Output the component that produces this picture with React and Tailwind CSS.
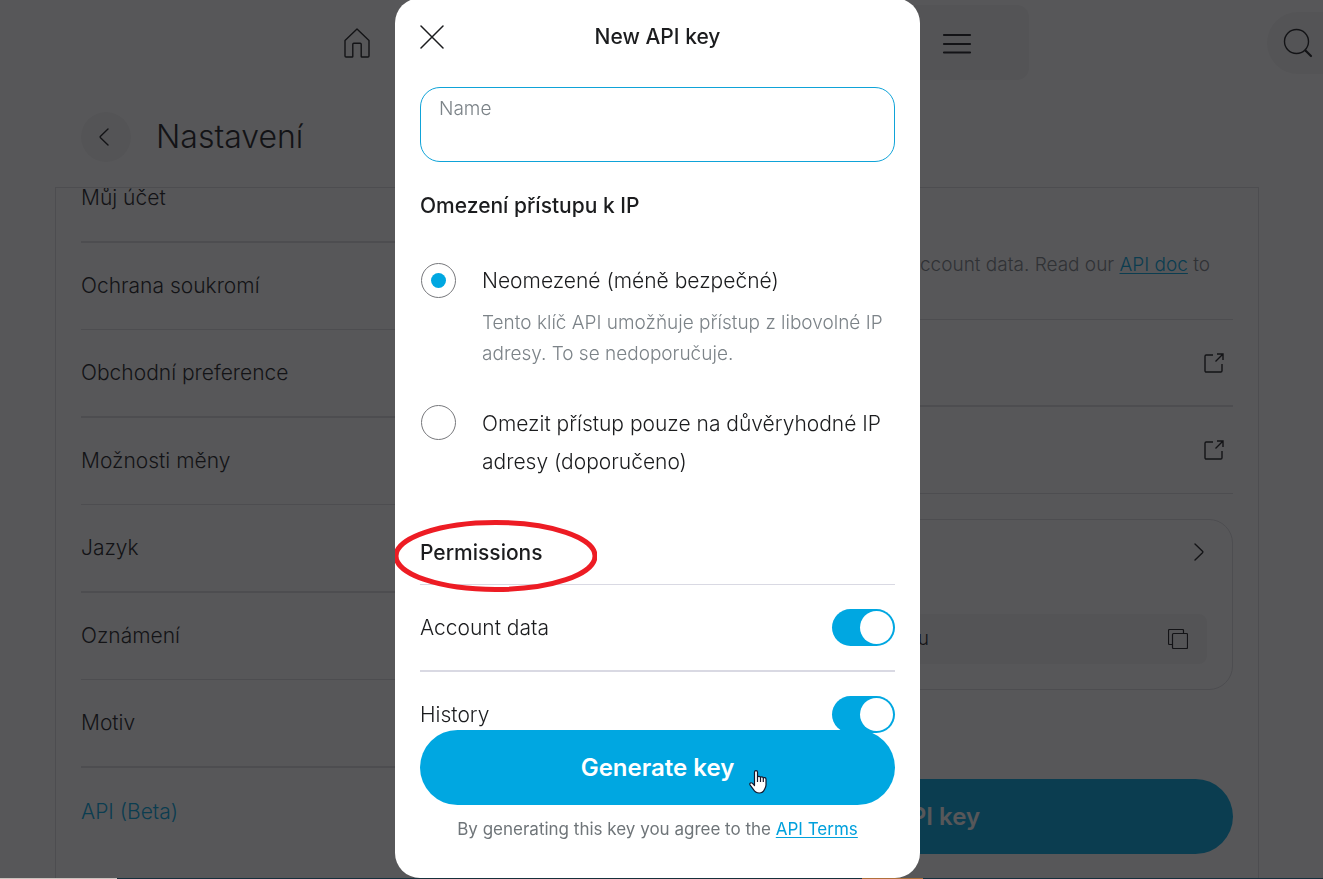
import { useState } from 'react'

const menu = [
  'Můj účet',
  'Ochrana soukromí',
  'Obchodní preference',
  'Možnosti měny',
  'Jazyk',
  'Oznámení',
  'Motiv',
  'API (Beta)',
]

const HomeIcon = () => (
  <svg width="26" height="30" viewBox="0 0 26 30" fill="none" stroke="currentColor" strokeWidth="1.4" strokeLinejoin="round">
    <path d="M1 12.5 13 1l12 11.500V28a1 1 0 0 1-1 1h-6.200a.6.6 0 0 1-.6-.6V16.200a1 1 0 0 0-1-1h-6.400a1 1 0 0 0-1 1V28.400a.6.6 0 0 1-.6.6H2a1 1 0 0 1-1-1z" />
  </svg>
)

const MenuIcon = () => (
  <svg width="30" height="22" viewBox="0 0 30 22" fill="none" stroke="currentColor" strokeWidth="2.200" strokeLinecap="round">
    <path d="M2 3h26M2 12h26M2 20.500h26" />
  </svg>
)

const SearchIcon = () => (
  <svg width="30" height="30" viewBox="0 0 30 30" fill="none" stroke="currentColor" strokeLinecap="round">
    <circle cx="13.500" cy="13.500" r="12" strokeWidth="1.400" />
    <path d="m22.500 22.500 5.500 5.500" strokeWidth="2.200" />
  </svg>
)

const Chevron = ({ left }) => (
  <svg width="10" height="18" viewBox="0 0 10 18" fill="none" stroke="currentColor" strokeWidth="1.400" strokeLinecap="round" strokeLinejoin="round">
    <path d={left ? 'M9 1 1.500 8.300a1 1 0 0 0 0 1.400L9 17' : 'm1 1 7.500 7.300a1 1 0 0 1 0 1.400L1 17'} />
  </svg>
)

const ExternalIcon = () => (
  <svg width="20" height="20" viewBox="0 0 20 20" fill="none" stroke="currentColor" strokeWidth="1.400">
    <path d="M9 2H2.200A1.200 1.200 0 0 0 1 3.200v14.600A1.200 1.200 0 0 0 2.200 19h14.600a1.200 1.200 0 0 0 1.200-1.200V11M13 1h6v6M19 1l-7.500 7.500" />
  </svg>
)

const CopyIcon = () => (
  <svg width="20" height="20" viewBox="0 0 20 20" fill="none" stroke="currentColor" strokeWidth="1.200" strokeLinejoin="round">
    <rect x="4.500" y="4.500" width="15" height="15" rx="1" />
    <path d="M4.500 15.500h-3a1 1 0 0 1-1-1v-13a1 1 0 0 1 1-1h13a1 1 0 0 1 1 1v3" />
  </svg>
)

const CloseIcon = () => (
  <svg width="24" height="24" viewBox="0 0 24 24" fill="none" stroke="currentColor" strokeWidth="1.500" strokeLinecap="round">
    <path d="m1 1 22 22M23 1 1 23" />
  </svg>
)

const HandPointer = () => (
  <svg className="absolute left-[329px] top-10" width="18" height="24" viewBox="0 0 18 24" fill="#fff" stroke="#12162b" strokeWidth="1.200" strokeLinejoin="round">
    <path d="M5.500 13.500V2.200a1.500 1.500 0 0 1 3 0V7c.3-1 2.700-1 3 .4.500-.9 2.500-.7 2.800.5.700-.7 2.700-.3 2.700 1.300V15c0 2-1 3.500-1.700 4.800-.8 2-2.300 3.200-5 3.200-3.300 0-5-1.700-6-3.700L1 14.800c-.7-1.400 1-2.700 2.300-1.600l2.200 2.300z" />
    <path d="M8.500 7v5M11.500 7.500V12M14.300 8v4" fill="none" />
  </svg>
)

function Radio({ id, checked, onChange, children }) {
  return (
    <div className="flex items-start">
      <input
        type="radio"
        name="ip"
        id={id}
        checked={checked}
        onChange={onChange}
        className="ml-px mr-[26px] grid h-[35px] w-[35px] shrink-0 appearance-none place-content-center rounded-full border border-[#77787c] before:h-[15px] before:w-[15px] before:rounded-full checked:before:bg-[#00a7e1]"
      />
      {children}
    </div>
  )
}

function Permission({ id, label }) {
  const [on, setOn] = useState(true)
  return (
    <div className="flex h-[87px] items-center justify-between border-b-2 border-[#d9d9e3]">
      <label htmlFor={id} className="text-[21px] font-light leading-7">{label}</label>
      <input
        type="checkbox"
        role="switch"
        id={id}
        checked={on}
        onChange={() => setOn(!on)}
        className="flex h-[37px] w-[63px] appearance-none items-center rounded-full bg-gray-300 px-0.5 before:h-[33px] before:w-[33px] before:rounded-full before:bg-white checked:justify-end checked:bg-[#00a7e1]"
      />
    </div>
  )
}

function SettingsPage() {
  return (
    <div className="flex h-full flex-col">
      <header className="relative flex h-[86px] shrink-0 justify-center pr-2.5 pt-[5px]">
        <nav className="flex h-[75px] gap-1.5">
          <a href="#home" aria-label="Home" className="flex w-36 items-center justify-center"><HomeIcon /></a>
          <span className="w-36" />
          <span className="w-36" />
          <span className="w-36" />
          <button aria-label="Menu" className="flex w-36 items-center justify-center rounded-xl bg-[#f5f5f5]"><MenuIcon /></button>
        </nav>
        <button aria-label="Search" className="absolute right-0 top-3 flex h-[62px] w-14 items-center rounded-l-full bg-[#f5f5f5] pl-4">
          <SearchIcon />
        </button>
      </header>

      <div className="flex h-[101px] shrink-0 items-center gap-[25px] pl-[81px]">
        <button aria-label="Back" className="flex h-[50px] w-[50px] items-center justify-center rounded-full bg-[#f5f5f5] pr-1"><Chevron left /></button>
        <h1 className="text-[32px] font-light">Nastavení</h1>
      </div>

      <div className="ml-[55px] mr-16 flex min-h-0 flex-1 overflow-hidden border border-b-0 border-[#dcdce0] px-[25px]">
        <ul className="w-[400px] shrink-0 text-[21px] font-light leading-5">
          {menu.map((item, i) => (
            <li
              key={item}
              className={
                i % 2 === 0
                  ? 'flex h-[88px] items-center border-b-2 border-[#dcdce0] first:h-[55px] first:items-start'
                  : 'flex h-[87px] items-center border-b border-[#dcdce0] last:border-0'
              }
            >
              <a href="#settings" className={item === 'API (Beta)' ? 'text-[#00a7e1]' : ''}>{item}</a>
            </li>
          ))}
        </ul>

        <main className="ml-[26px] min-w-0 flex-1">
          <p className="flex h-[131px] items-center justify-end whitespace-pre pr-[23px] pt-[23px] text-[19px] font-light text-[#7c8388]">
            account data. Read our <a href="#doc" className="text-[#00a7e1] underline underline-offset-2">API doc</a> to
          </p>
          <a href="#guide" aria-label="Guide" className="flex h-[88px] items-center justify-end border-b-2 border-t border-[#dcdce0] pr-[9px]">
            <ExternalIcon />
          </a>
          <a href="#support" aria-label="Support" className="flex h-[87px] items-center justify-end border-b border-[#dcdce0] pr-[9px]">
            <ExternalIcon />
          </a>
          <section className="mt-[25px] rounded-3xl border border-[#dcdce0] px-[25px] pb-[25px] pt-[23px]">
            <div className="flex h-[71px] justify-end pr-[3px]"><Chevron /></div>
            <div className="flex h-[50px] items-center justify-between rounded-lg bg-[#f5f5f5] pr-[19px]">
              <span className="w-[396px] text-right text-[19px] font-light">u</span>
              <button aria-label="Copy"><CopyIcon /></button>
            </div>
          </section>
          <button className="mt-[89px] h-[75px] w-full rounded-full bg-[#00a7e1] pr-[253px] text-right text-2xl font-semibold text-white">
            API key
          </button>
        </main>
      </div>
    </div>
  )
}

function NewKeyDialog() {
  const [access, setAccess] = useState('any')
  const [name, setName] = useState('')

  return (
    <div className="fixed inset-0 flex justify-center bg-[#0f1013]/70 pb-px pr-2">
      <div role="dialog" aria-labelledby="title" className="-mt-0.5 flex w-[525px] flex-col rounded-[25px] bg-white pt-0.5">
        <header className="grid h-[74px] shrink-0 grid-cols-[24px_1fr_24px] items-center px-[25px]">
          <button aria-label="Close"><CloseIcon /></button>
          <h2 id="title" className="text-center text-[21px] font-medium leading-7">New API key</h2>
        </header>

        <div className="min-h-0 flex-1 overflow-hidden px-[25px] pt-[13px]">
          <div className="h-[75px] rounded-[20px] border border-[#0fa3d8] px-[18px] pt-2">
            <label htmlFor="name" className="block text-[19px] font-light leading-[26px] text-[#7c8388]">Name</label>
            <input id="name" value={name} onChange={(e) => setName(e.target.value)} className="block h-8 w-full text-[19px] outline-none" />
          </div>

          <h3 className="mt-[30px] text-[21px] font-medium leading-7">Omezení přístupu k IP</h3>

          <div className="mt-[43px] flex flex-col gap-9">
            <Radio id="any" checked={access === 'any'} onChange={() => setAccess('any')}>
              <div>
                <label htmlFor="any" className="block text-[21px] font-light leading-9">Neomezené (méně bezpečné)</label>
                <p className="mt-2 whitespace-nowrap text-[19px] font-light leading-[31px] text-[#7c8388]">
                  Tento klíč API umožňuje přístup z libovolné IP
                  <br />
                  adresy. To se nedoporučuje.
                </p>
              </div>
            </Radio>
            <Radio id="trusted" checked={access === 'trusted'} onChange={() => setAccess('trusted')}>
              <label htmlFor="trusted" className="whitespace-nowrap text-[21px] font-light leading-[38px]">
                Omezit přístup pouze na důvěryhodné IP
                <br />
                adresy (doporučeno)
              </label>
            </Radio>
          </div>

          <div className="relative mt-[58px] border-b border-[#d9d9e3] pb-[17px]">
            <h3 className="text-[21px] font-medium leading-7">Permissions</h3>
            <svg className="absolute -left-[27px] -top-5" width="204" height="74" viewBox="0 0 204 74" fill="none" stroke="#ed1c24" strokeWidth="5">
              <ellipse cx="102.500" cy="37" rx="99.500" ry="33.500" />
            </svg>
          </div>
          <Permission id="account" label="Account data" />
          <Permission id="history" label="History" />
        </div>

        <footer className="relative -mt-4 shrink-0 px-[25px] pb-[37px]">
          <button className="relative block h-[75px] w-full rounded-full bg-[#00a7e1] pt-px text-2xl font-semibold text-white">
            Generate key
            <HandPointer />
          </button>
          <p className="mt-3 whitespace-nowrap text-center text-[17px] leading-6 text-[#6f7579]">
            By generating this key you agree to the <a href="#terms" className="text-[#00a0dc] underline underline-offset-2">API Terms</a>
          </p>
        </footer>
      </div>
    </div>
  )
}

export default function App() {
  return (
    <div className="relative h-screen overflow-hidden bg-white font-['Inter',sans-serif] text-[#1b1c1e]">
      <SettingsPage />
      <NewKeyDialog />
      <div className="fixed inset-x-0 bottom-0 flex h-px bg-[#16303c]">
        <div className="w-[117px] bg-[#c9c4bf]" />
        <div className="ml-[745px] w-[61px] bg-[#b0703a]" />
      </div>
    </div>
  )
}
